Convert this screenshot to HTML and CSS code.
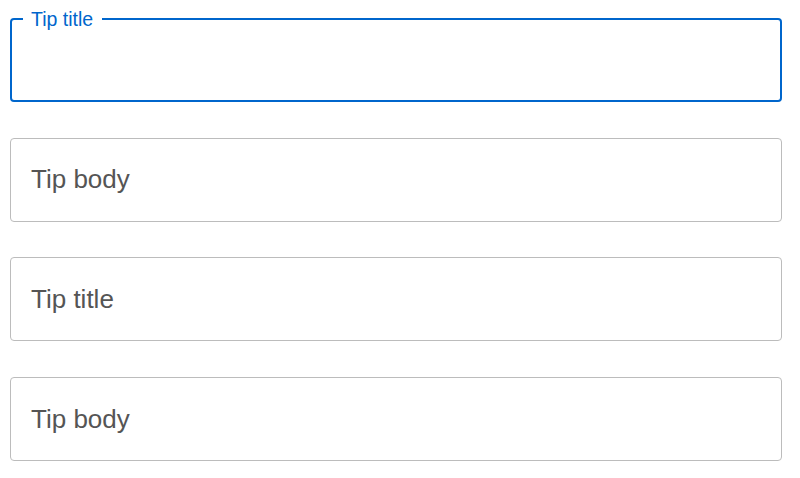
FILE: index.html
```html
<!DOCTYPE html>
<html lang="en">
<head>
<meta charset="utf-8">
<title>Tip form</title>
<link rel="stylesheet" href="styles.css">
</head>
<body>
<form class="form">
  <div class="field field--focused">
    <label class="field__label" for="t1">Tip title</label>
    <input class="field__input" id="t1" type="text">
  </div>
  <div class="field">
    <input class="field__input" type="text" placeholder="Tip body">
  </div>
  <div class="field">
    <input class="field__input" type="text" placeholder="Tip title">
  </div>
  <div class="field">
    <input class="field__input" type="text" placeholder="Tip body">
  </div>
</form>
</body>
</html>
```

FILE: styles.css
```css
html, body {
  margin: 0;
  padding: 0;
  background: #ffffff;
}

body {
  font-family: "Liberation Sans", Arial, Helvetica, sans-serif;
}

.form {
  display: flex;
  flex-direction: column;
  gap: 35.7px;
  padding: 18px 18px 0 10px;
}

.field {
  position: relative;
  box-sizing: border-box;
  height: 84px;
  border: 1px solid #bcbcbc;
  border-radius: 4px;
  display: flex;
  align-items: center;
  padding-left: 20px;
  background: #ffffff;
}

.field--focused {
  border: 2px solid #0066cc;
  padding-left: 19px;
}

.field__label {
  position: absolute;
  left: 11px;
  top: -10px;
  padding: 0 9px 0 8px;
  background: #ffffff;
  color: #0066cc;
  font-size: 19.5px;
  line-height: 19px;
}

.field__input {
  flex: 1;
  min-width: 0;
  border: 0;
  outline: none;
  padding: 0;
  margin: 0;
  background: transparent;
  font-family: "Liberation Sans", Arial, Helvetica, sans-serif;
  font-size: 26px;
  color: #555555;
}

.field__input::placeholder {
  color: #555555;
  opacity: 1;
}
```
